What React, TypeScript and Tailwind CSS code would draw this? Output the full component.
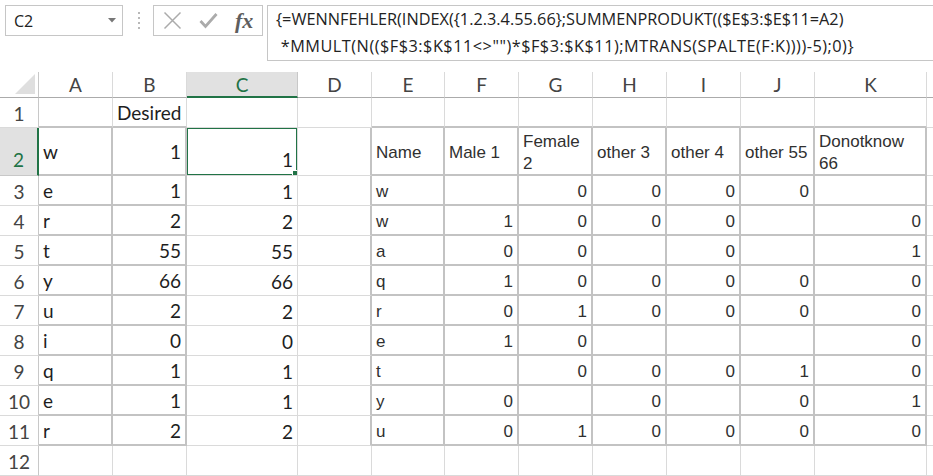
import React from 'react'

type Val = string | number

const COLS = ['A', 'B', 'C', 'D', 'E', 'F', 'G', 'H', 'I', 'J', 'K']

const left: Record<number, Val[]> = {
  2: ['w', 1, 1],
  3: ['e', 1, 1],
  4: ['r', 2, 2],
  5: ['t', 55, 55],
  6: ['y', 66, 66],
  7: ['u', 2, 2],
  8: ['i', 0, 0],
  9: ['q', 1, 1],
  10: ['e', 1, 1],
  11: ['r', 2, 2],
}

const right: Record<number, Val[]> = {
  3: ['w', '', 0, 0, 0, 0, ''],
  4: ['w', 1, 0, 0, 0, '', 0],
  5: ['a', 0, 0, '', 0, '', 1],
  6: ['q', 1, 0, 0, 0, 0, 0],
  7: ['r', 0, 1, 0, 0, 0, 0],
  8: ['e', 1, 0, '', '', '', 0],
  9: ['t', '', 0, 0, 0, 1, 0],
  10: ['y', 0, '', 0, '', 0, 1],
  11: ['u', 0, 1, 0, 0, 0, 0],
}

const headers: React.ReactNode[] = [
  'Name',
  'Male 1',
  <>Female<br />2</>,
  'other 3',
  'other 4',
  'other 55',
  <>Donotknow<br />66</>,
]

// column index 0..10 = A..K
const inTable = (r: number, c: number) =>
  r >= 2 && r <= 11 && (c <= 1 || (c >= 4 && c <= 10))

function valueAt(r: number, c: number): Val | React.ReactNode {
  if (r === 1 && c === 1) return 'Desired'
  if (c <= 2 && left[r]) return left[r][c]
  if (c >= 4 && r === 2) return headers[c - 4]
  if (c >= 4 && right[r]) return right[r][c - 4]
  return ''
}

function Cell({ r, c }: { r: number; c: number }) {
  const v = valueAt(r, c)
  const thickR = inTable(r, c) || inTable(r, c + 1)
  const thickB = inTable(r, c) || inTable(r + 1, c)
  const isNum = typeof v === 'number'
  const arial = c >= 4
  const selected = r === 2 && c === 2
  return (
    <div
      className={[
        'relative flex overflow-hidden whitespace-nowrap px-[4px]',
        thickR ? 'border-r-2 border-r-[#c3c3c3]' : 'border-r border-r-[#dadada]',
        thickB ? 'border-b-2 border-b-[#c3c3c3]' : 'border-b border-b-[#dadada]',
        isNum ? 'justify-end' : 'justify-start',
        selected ? 'items-end pb-[1px]' : 'items-center pt-[3px]',
        arial
          ? "font-['Liberation_Sans',Arial,sans-serif] text-[17px] leading-[22px] text-[#303030]"
          : "font-['Lato',sans-serif] text-[19px] text-[#1e1e1e]",
      ].join(' ')}
    >
      <span>{v}</span>
      {selected && (
        <>
          <div className="pointer-events-none absolute -top-[1px] -left-[1px] right-[-1px] bottom-[-1px] border-2 border-[#217346]" />
          <div className="absolute -right-[2px] -bottom-[2px] h-[7px] w-[7px] border border-white bg-[#217346]" />
        </>
      )}
    </div>
  )
}

function RowHead({ r }: { r: number }) {
  const active = r === 2
  return (
    <div
      className={[
        "flex justify-center font-['Lato',sans-serif] text-[19px]",
        active
          ? 'items-end bg-[#e1e1e1] pb-[1px] text-[#217346] border-r-2 border-r-[#217346] border-b border-b-[#c8c8c8]'
          : 'items-center pt-[3px] bg-white text-[#444444] border-r border-r-[#c8c8c8] border-b border-b-[#dadada]',
      ].join(' ')}
    >
      {r}
    </div>
  )
}

function FormulaBar() {
  return (
    <div className="flex h-[62px] items-start pt-[5px] font-['Open_Sans',sans-serif]">
      <div className="ml-[5px] flex h-[31px] w-[118px] items-center justify-between border border-[#c6c6c6] pr-[6px] pl-[8px] text-[16px] text-[#222]">
        <span>C2</span>
        <svg width="8" height="5" viewBox="0 0 8 5">
          <polygon points="0,0 8,0 4,4.5" fill="#777" />
        </svg>
      </div>
      <div className="ml-[14px] flex h-[31px] w-[3px] flex-col items-center justify-center gap-[3px]">
        <div className="h-[2px] w-[2px] bg-[#b8b8b8]" />
        <div className="h-[2px] w-[2px] bg-[#b8b8b8]" />
        <div className="h-[2px] w-[2px] bg-[#b8b8b8]" />
        <div className="h-[2px] w-[2px] bg-[#b8b8b8]" />
      </div>
      <div className="ml-[13px] flex h-[31px] w-[110px] items-center border border-[#c6c6c6]">
        <svg className="ml-[9px]" width="19" height="19" viewBox="0 0 19 19">
          <path d="M1.5 1.5 L17.5 17.5 M17.5 1.5 L1.5 17.5" stroke="#ababab" strokeWidth="1.5" />
        </svg>
        <svg className="ml-[17px]" width="19" height="17" viewBox="0 0 19 17">
          <path d="M1.5 9 L6.5 14.5 L17.5 2" fill="none" stroke="#ababab" strokeWidth="2.8" />
        </svg>
        <span className="ml-[17px] font-['Liberation_Serif',serif] text-[22px] leading-none font-bold italic text-[#5e5e5e]">
          fx
        </span>
      </div>
      <div className="ml-[4px] h-[56px] flex-1 border-y border-l border-[#c6c6c6] pl-[8px] text-[16.3px] leading-[27px] whitespace-pre text-[#222]">
        <div>{'{=WENNFEHLER(INDEX({1.2.3.4.55.66};SUMMENPRODUKT(($E$3:$E$11=A2)'}</div>
        <div className="tracking-[0.5px]">{' *MMULT(N(($F$3:$K$11<>"")*$F$3:$K$11);MTRANS(SPALTE(F:K))))-5);0)}'}</div>
      </div>
    </div>
  )
}

export default function App() {
  const rows = Array.from({ length: 12 }, (_, i) => i + 1)
  return (
    <div className="h-[476px] w-[933px] overflow-hidden bg-white">
      <FormulaBar />
      <div className="h-[10px]" />
      <div className="grid grid-cols-[39px_74px_74px_111px_74px_73px_74px_74px_74px_74px_74px_112px_1fr] grid-rows-[26px_30px_48px_30px_30px_30px_30px_30px_30px_30px_30px_30px_30px]">
        <div className="flex items-end justify-end border-r border-b border-r-[#c8c8c8] border-b-[#ababab] pr-[3px] pb-[3px]">
          <svg width="20" height="20" viewBox="0 0 20 20">
            <polygon points="20,0 20,20 0,20" fill="#dfdfdf" />
          </svg>
        </div>
        {COLS.map((l) =>
          l === 'C' ? (
            <div
              key={l}
              className="flex items-center justify-center border-r border-r-[#c8c8c8] border-b-2 border-b-[#217346] bg-[#e1e1e1] pt-[2px] font-['Lato',sans-serif] text-[19px] text-[#217346]"
            >
              {l}
            </div>
          ) : (
            <div
              key={l}
              className="flex items-center justify-center border-r border-b border-r-[#dadada] border-b-[#ababab] pt-[2px] font-['Lato',sans-serif] text-[19px] text-[#444444]"
            >
              {l}
            </div>
          )
        )}
        <div className="border-b border-b-[#ababab]" />
        {rows.map((r) => (
          <React.Fragment key={r}>
            <RowHead r={r} />
            {COLS.map((_, c) => (
              <Cell key={c} r={r} c={c} />
            ))}
            <div className="border-b border-b-[#dadada]" />
          </React.Fragment>
        ))}
      </div>
    </div>
  )
}
